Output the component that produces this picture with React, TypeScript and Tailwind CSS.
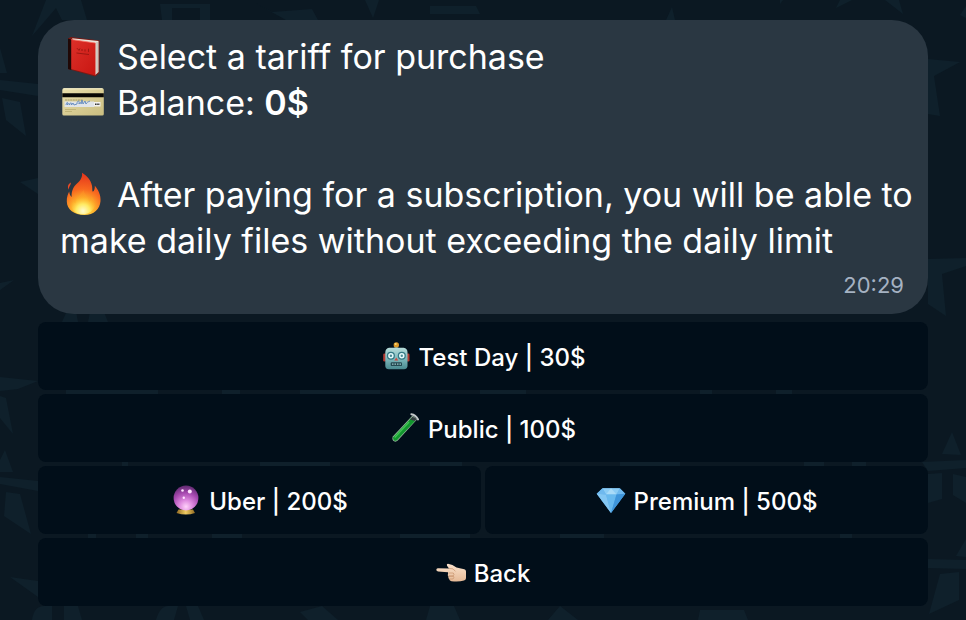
import type { ReactNode } from "react";

function Wallpaper() {
  return (
    <svg
      className="absolute inset-0 h-full w-full"
      viewBox="0 0 966 620"
      preserveAspectRatio="xMidYMid slice"
      aria-hidden="true"
    >
      <g fill="#0f202b">
        <path d="M46 0h35l6 20H62l-6-12-24 28z" />
        <path d="M0 48l7 25H0zM0 80l38 4v12L0 90zM2 98l18 4 6 34L6 120z" />
        <path d="M20 182l18-4v16zM0 283l14-3-14 10z" />
        <path d="M160 4h50v16h-10V8h-28v12h-10zM250 0l22 12 40-3 6 11h-32z" />
        <path d="M365 0l8 18 6-18zM430 6h46l4 8h-50z" />
        <path d="M666 20l6-13 3 13zM780 0v4l3-4zM836 8l4-8h12zM885 0h14l4 14zM960 15l6-9v12z" />
        <path d="M928 59l32 3-26 14 6 40-12-2z" />
        <path d="M928 259l38-1v8l-24 8 4 42-18-12z" />
        <path d="M62 322l4-9 10-2 2 11zM88 322l2-10h14l4 10z" />
        <path d="M0 377l38 4-20 8-18 2zM0 396l6 2 7 36-13-16z" />
        <path d="M0 460l5-10 8 22H0zM0 477l38 4v10L0 484zM6 492l14 2 11 40-27-18z" />
        <path d="M10 577l28 4v16z" />
        <path d="M66 390h92v4H66zM222 390h18v4h-18zM300 390h80v4h-80zM480 390h46v4h-46zM700 390h12v4h-12zM776 390h16v4h-16z" />
        <path d="M122 462h6v4h-6zM260 462h70v4h-70zM430 462h32v4h-32zM620 462h60v4h-60zM804 462h20v4h-20zM852 462h14v4h-14z" />
        <path d="M88 534h8v4h-8zM136 534h12v4h-12zM212 534h30v4h-30zM400 534h70v4h-70zM560 534h44v4h-44zM840 534h12v4h-12z" />
        <path d="M32 620q2-14 12-14h8v14zM64 606h14l4 14H64zM156 620q4-14 12-14h10l-4 14zM186 606h12l6 14h-14z" />
        <path d="M300 612l22-6 16 14h-30zM430 606h24l6 14h-34zM560 606l18 14h-30zM700 610h44l4 10h-50z" />
        <path d="M942 454l10-22 9 23zM922 462l44-2v8l-38 3zM928 474l14-1v26l-14 4zM953 474l13 3v26l-13-8z" />
        <path d="M956 556l10-17v18zM928 559l38 1v9l-38-1zM940 574l19-2v28l-30 14z" />
      </g>
    </svg>
  );
}

function TextIcon({ children }: { children: ReactNode }) {
  return (
    <svg className="mr-[13px] inline-block h-[46px] w-11 align-top" viewBox="0 0 44 46" aria-hidden="true">
      {children}
    </svg>
  );
}

function BookIcon() {
  return (
    <TextIcon>
      <defs>
        <linearGradient id="cover" x1="0" y1="0" x2="1" y2="1">
          <stop offset="0" stopColor="#dc3029" />
          <stop offset="1" stopColor="#c91612" />
        </linearGradient>
      </defs>
      <path d="M8 4.5 11 3l28.5 3.5V39L35 42.5 8 35z" fill="#7d1913" />
      <path d="M12 4.2 38.5 7v31l-3.3 3z" fill="#e9e4da" />
      <path d="M36.8 8v31.5M37.8 8v30.5" stroke="#aaa39a" strokeWidth=".5" />
      <path d="M11 5.5 35.5 9v32.5L11 35z" fill="url(#cover)" />
      <path d="M8 4.5 11.2 5.5V36L8 35z" fill="#200806" />
      <path d="M11.5 5.5 35.5 9" stroke="#f8756a" strokeWidth=".8" />
      <path d="M17 14.2l2 2.2 1-2M22 15v2M25 15.3v2.2M28.5 14.7v3.2M16.5 19l12.5 1.5" stroke="#9d1711" strokeWidth="1" fill="none" />
    </TextIcon>
  );
}

function CardIcon() {
  return (
    <TextIcon>
      <defs>
        <linearGradient id="card" x1="0" y1="0" x2="1" y2="1">
          <stop offset="0" stopColor="#e9dfae" />
          <stop offset=".5" stopColor="#d9cd94" />
          <stop offset="1" stopColor="#c9bd80" />
        </linearGradient>
      </defs>
      <rect x="2.3" y="8.3" width="41.5" height="27.2" rx="1.6" fill="url(#card)" />
      <path d="M3.5 8.8h39" stroke="#faf3cf" />
      <path d="M2.3 13.2h41.5v4H2.3z" fill="#080704" />
      <path d="M5 20h18" stroke="#9b915f" strokeWidth=".8" strokeDasharray="2 .6" />
      <path d="M4.500 21.500h29.500v5.500H4.500z" fill="#e0e4e8" />
      <path d="M34 22h6.500v4.500H34z" fill="#f3f2ef" />
      <path d="M35 24.300h4.500" stroke="#343434" strokeWidth="1.4" strokeDasharray="1.2 .4" />
      <path d="M6 25c1-4 2-3 1.500 0 1-2 2-2 2 0 1-3 2-3 2 0l1.500-2 1 2 3-1c0-4 3-4 2 0 1-2 2-2 2 0l1-4 1 4 2-3 1 3c1-2 2-2 4-3" fill="none" stroke="#5f87bd" strokeWidth=".9" />
      <path d="M5 29.500h11M5 31.500h7" stroke="#b9ad70" strokeWidth=".8" />
    </TextIcon>
  );
}

function FireIcon() {
  return (
    <TextIcon>
      <defs>
        <radialGradient id="flame" gradientUnits="userSpaceOnUse" cx="23" cy="38" r="35">
          <stop offset="0" stopColor="#ffe45a" />
          <stop offset=".3" stopColor="#ffb52c" />
          <stop offset=".6" stopColor="#f8691f" />
          <stop offset="1" stopColor="#e5391d" />
        </radialGradient>
        <radialGradient id="core" gradientUnits="userSpaceOnUse" cx="23" cy="39" r="14">
          <stop offset="0" stopColor="#fffbd0" />
          <stop offset=".5" stopColor="#ffea62" />
          <stop offset="1" stopColor="#ffae26" stopOpacity=".2" />
        </radialGradient>
      </defs>
      <path d="M22 .8c5 3 9 7.500 10 13 .5 3 0 5 .8 6 1.700-1.200 2.200-3.500 2-6 3.500 4 6.200 9.200 5.700 15.500C39.800 37 34 43 24.500 43 14 43 7 37.500 6.800 29.500 6.600 25 8 22 9.200 19.500c.3 2.500 1 4.200 2.500 5.500-.5-6 1.800-10.500 5.300-13.500C21 8 22.500 5 22 .8z" fill="url(#flame)" />
      <path d="M10.800 10.500c.3 3-2.500 4.200-1.800 7.300-2-2.800-1-5.500 1.800-7.300z" fill="#ee4b25" />
      <path d="M23.500 18c1 5 5.500 7 5.500 12 2-1.500 2.800-3.500 2.500-6 4 5 5 10 1 14-2.500 3-6 4.300-9.500 4.300-6 0-11-3-11.500-8.300-.3-3 .5-5 2-7 0 2 .7 3.500 2 4.500 0-6 5-8.500 8-13.500z" fill="url(#core)" />
    </TextIcon>
  );
}

function ButtonIcon({ children }: { children: ReactNode }) {
  return (
    <svg className="size-[30px] shrink-0" viewBox="0 0 30 30" aria-hidden="true">
      {children}
    </svg>
  );
}

function RobotIcon() {
  return (
    <ButtonIcon>
      <defs>
        <linearGradient id="robot" x1="0" y1="0" x2="0" y2="1">
          <stop offset="0" stopColor="#b6dcda" />
          <stop offset=".5" stopColor="#7fb9bc" />
          <stop offset="1" stopColor="#49898f" />
        </linearGradient>
      </defs>
      <rect x="2.2" y="12.5" width="3" height="8" rx="1.2" fill="#b43a32" />
      <rect x="25.5" y="12.5" width="3" height="8" rx="1.2" fill="#b43a32" />
      <path d="M12 7.500q3.300-3 6.600 0z" fill="#6a9da0" />
      <circle cx="15.3" cy="3.9" r="2.7" fill="#dc9828" />
      <circle cx="14.7" cy="3.1" r="1" fill="#f8da7a" />
      <path d="M8 6.800h14.600q3.900.5 3.900 4.500v14q-.5 3-3.500 3H7.700q-3-.2-3.400-3v-14q.2-3.700 3.700-4.500z" fill="url(#robot)" />
      <g fill="#e7fbfc" stroke="#347985" strokeWidth="1.3">
        <circle cx="9.9" cy="14.7" r="3.4" />
        <circle cx="20.8" cy="14.7" r="3.4" />
      </g>
      <circle cx="9.9" cy="14.7" r="1.2" fill="#4d8c97" />
      <circle cx="20.8" cy="14.7" r="1.2" fill="#4d8c97" />
      <path d="M15.300 16.600l1.900 3h-3.800z" fill="#d1473e" />
      <rect x="9.7" y="21.3" width="11.3" height="3.8" rx="1.2" fill="#244a52" />
      <path d="M11 23.200h9" stroke="#9cc6c8" strokeWidth="1.3" strokeDasharray="1.5 1" />
    </ButtonIcon>
  );
}

function TubeIcon() {
  return (
    <ButtonIcon>
      <path d="M22.500 2.500 2.800 23.500q-1.300 3.300 1.200 4.800 2 1 3.800-.8L27 6.500z" fill="#94b49b" />
      <path d="M20.800 5.500 3.300 24.200q-.8 2.400.9 3.400 1.500.6 2.900-.7L25 8z" fill="#12962e" />
      <path d="M19 9 4.700 24.400" stroke="#3fc352" strokeWidth="1.5" />
      <path d="M22.500 3.700 20 6.500l4.800 1.500 2-2z" fill="#343e40" />
      <path d="M21.300 1.200q4.300.5 6.800 5.300" fill="none" stroke="#c3c8ca" strokeWidth="1.9" strokeLinecap="round" />
    </ButtonIcon>
  );
}

function CrystalBallIcon() {
  return (
    <ButtonIcon>
      <defs>
        <radialGradient id="orb" cx=".5" cy=".85" r=".85">
          <stop offset="0" stopColor="#ffd2fa" />
          <stop offset=".3" stopColor="#df8be0" />
          <stop offset=".65" stopColor="#a84ab1" />
          <stop offset="1" stopColor="#602a70" />
        </radialGradient>
        <linearGradient id="stand" x1="0" y1="0" x2="1" y2="0">
          <stop offset="0" stopColor="#8f6821" />
          <stop offset=".5" stopColor="#f0cc62" />
          <stop offset="1" stopColor="#8f6821" />
        </linearGradient>
      </defs>
      <path d="M7.500 24.500h14.500l2 3.500q-9 3-18.500 0z" fill="url(#stand)" />
      <circle cx="15" cy="13" r="12.4" fill="url(#orb)" />
      <g fill="#ffe4ff">
        <circle cx="11.5" cy="5.5" r="1.3" />
        <circle cx="18.8" cy="6.5" r="2" />
        <circle cx="12.8" cy="12.8" r="1.2" />
      </g>
    </ButtonIcon>
  );
}

function DiamondIcon() {
  return (
    <ButtonIcon>
      <path d="M6.500 3.200h17.300l5.500 5.500L15 28 .7 8.700z" fill="#50a5e5" />
      <path d="M6.500 3.200 10 9.500.7 8.700zM23.800 3.200 20.500 9.500l8.800-.8z" fill="#6fb9ee" />
      <path d="M6.500 3.200h17.300L20.500 9.500H10z" fill="#8ccdf5" />
      <path d="M15 3.200 10 9.500h10.500z" fill="#a9dbf8" />
      <path d="M10 9.500h10.500L15 28z" fill="#68b9ee" />
      <path d="M.7 8.700l9.300.8L15 28z" fill="#84c7f3" />
      <path d="M20.500 9.500l8.800-.8L15 28z" fill="#3f95da" />
    </ButtonIcon>
  );
}

function HandIcon() {
  return (
    <ButtonIcon>
      <defs>
        <linearGradient id="skin" x1="0" y1="0" x2="0" y2="1">
          <stop offset="0" stopColor="#fbe3cd" />
          <stop offset="1" stopColor="#e5b996" />
        </linearGradient>
      </defs>
      <path d="M1.800 11.200 13 11.400 11 8.700q-.7-1.700 1-1.900 4.500.6 8.500 3.800l7.800 1.700q1.700.5 1.700 2.200v6.800q-.2 1.900-2 2.200-5 1.700-12.500.8-2-.3-2.200-2-1.300-1-.9-2.700-1.200-1.200-.3-3L12 15.300 2 14.400Q.2 14 .3 12.700q.1-1.400 1.500-1.500z" fill="url(#skin)" />
      <path d="M12.700 16h4.600q1.500 1.500-.3 3h-4.400M13 19.200h4.500q1 1.700-.6 2.800h-3.500M13 11.400l4 .5 2.500 2.500" fill="none" stroke="#c7926c" strokeWidth=".7" />
    </ButtonIcon>
  );
}

function KeyboardButton({ icon, label }: { icon: ReactNode; label: string }) {
  return (
    <button
      type="button"
      className="flex h-[68px] min-w-0 flex-1 items-center justify-center gap-2 rounded-lg bg-[#010e19] text-2xl font-medium text-white"
    >
      {icon}
      <span className="pt-1">{label}</span>
    </button>
  );
}

export default function App() {
  return (
    <main className="relative min-h-screen overflow-hidden bg-[#0b1822] font-[Inter,'Liberation_Sans',sans-serif]">
      <Wallpaper />
      <div className="relative flex flex-col gap-2 px-[38px] pt-5 pb-3.5">
        <article className="rounded-[36px] bg-[#2a3742] pt-3.5 pr-3 pb-3.5 pl-[22px] text-white">
          <div className="text-[34px] leading-[46px]">
            <p>
              <BookIcon />
              Select a tariff for purchase
            </p>
            <p>
              <CardIcon />
              Balance: <strong className="font-semibold">0$</strong>
            </p>
            <p className="mt-[46px]">
              <FireIcon />
              After paying for a subscription, you will be able to make daily files without exceeding the daily limit
            </p>
          </div>
          <time className="block pt-1.5 pr-3 text-right text-[22px] leading-[30px] text-[#a5b2c2]">20:29</time>
        </article>
        <nav className="flex flex-col gap-1" aria-label="Tariffs">
          <div className="flex">
            <KeyboardButton icon={<RobotIcon />} label="Test Day | 30$" />
          </div>
          <div className="flex">
            <KeyboardButton icon={<TubeIcon />} label="Public | 100$" />
          </div>
          <div className="flex gap-1">
            <KeyboardButton icon={<CrystalBallIcon />} label="Uber | 200$" />
            <KeyboardButton icon={<DiamondIcon />} label="Premium | 500$" />
          </div>
          <div className="flex">
            <KeyboardButton icon={<HandIcon />} label="Back" />
          </div>
        </nav>
      </div>
    </main>
  );
}
